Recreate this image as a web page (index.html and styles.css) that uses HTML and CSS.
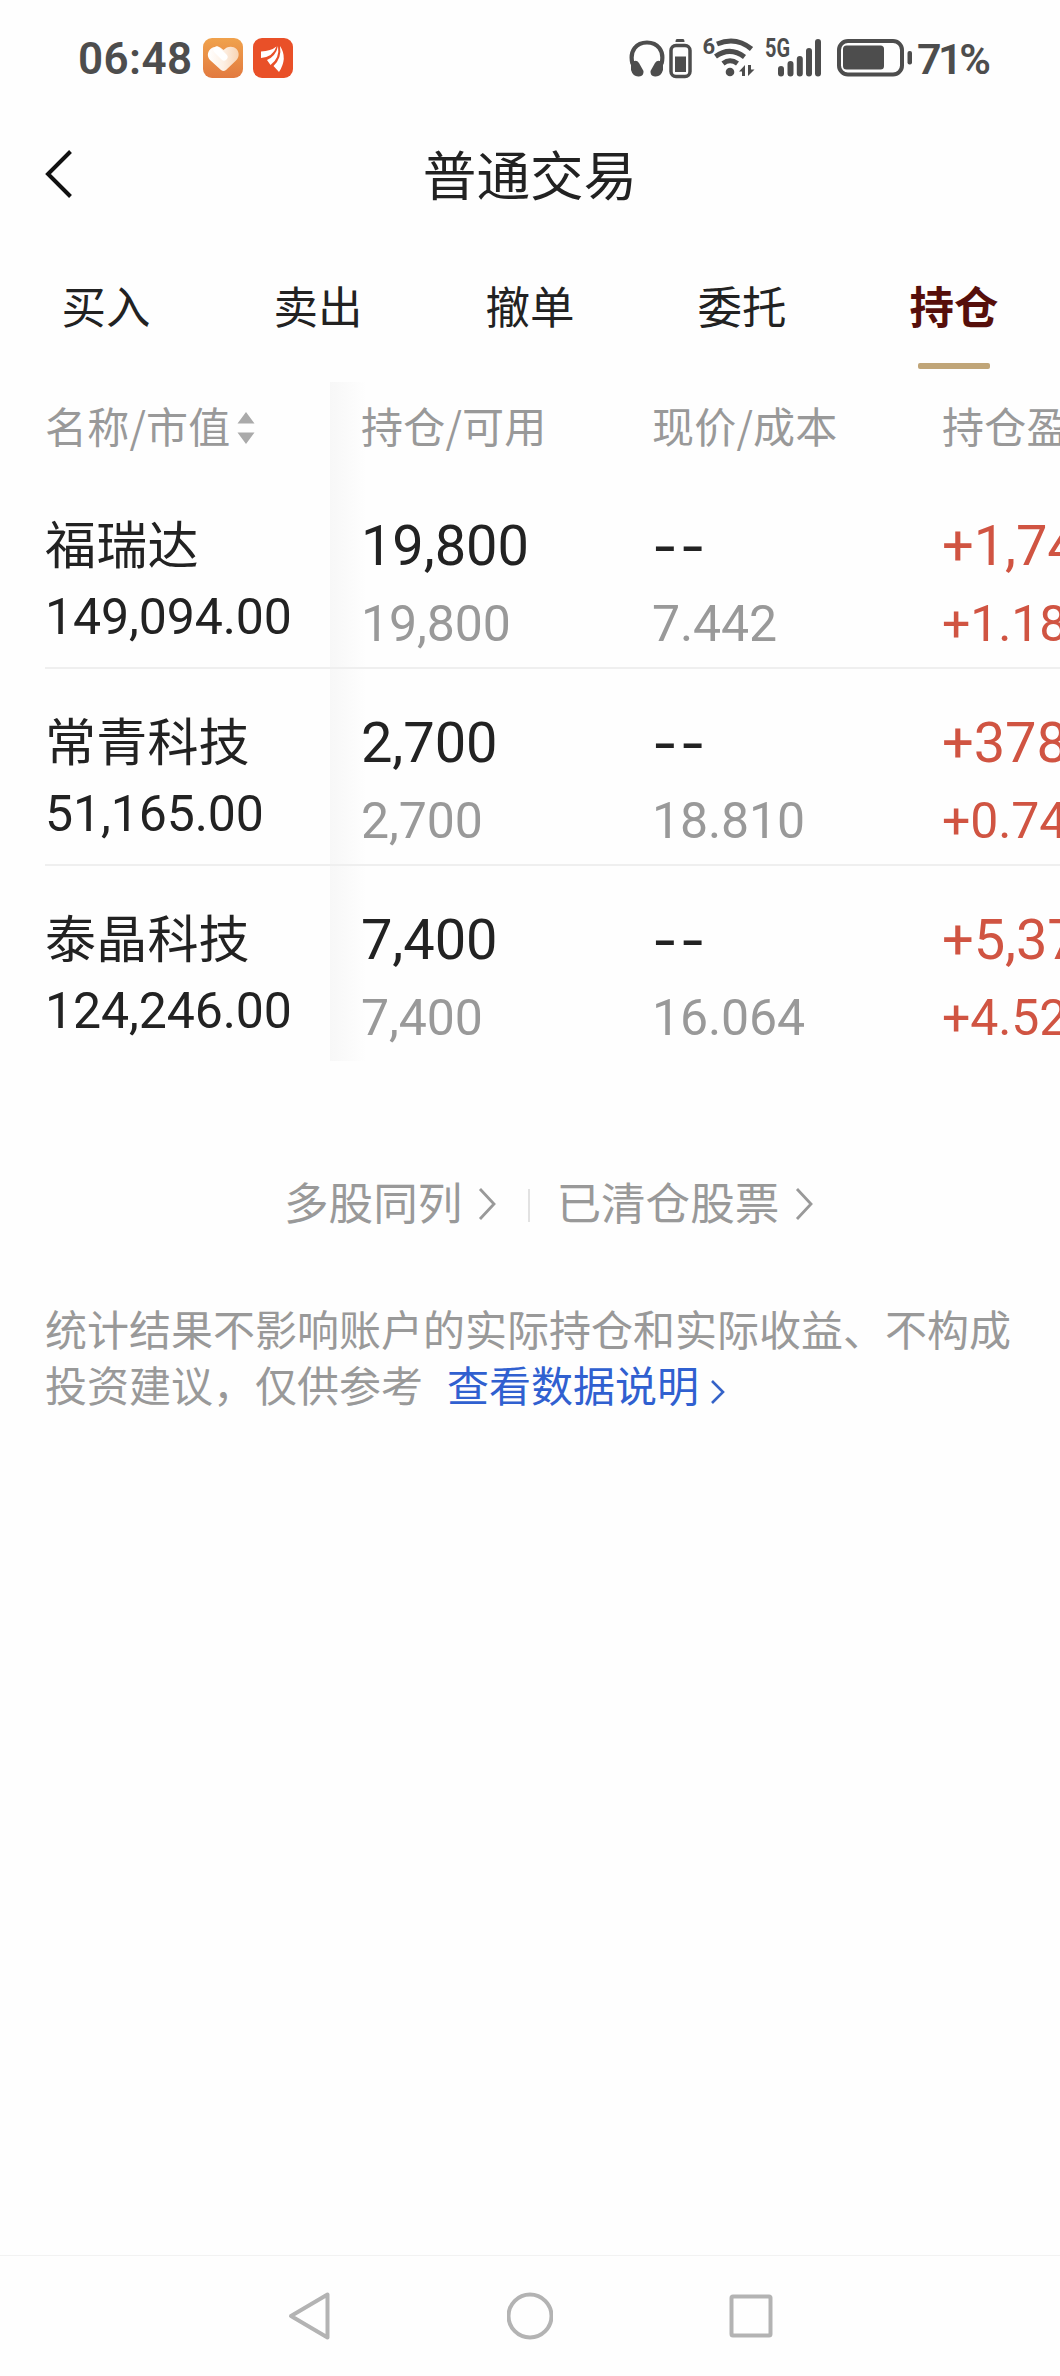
FILE: index.html
```html
<!DOCTYPE html>
<html lang="zh-CN">
<head>
<meta charset="utf-8">
<title>普通交易</title>
<link rel="stylesheet" href="styles.css">
</head>
<body>
<div class="screen">
  <header class="status">
    <div class="status-left">
      <span class="clock">06:48</span>
      <svg class="app" width="40" height="40" viewBox="0 0 40 40">
        <defs>
          <linearGradient id="orange" x1="0" y1="0" x2="0" y2="1"><stop offset="0" stop-color="#f0a24c"/><stop offset="1" stop-color="#e27a40"/></linearGradient>
          <linearGradient id="heart" x1="0" y1="0.3" x2="1" y2="0.3"><stop offset="0" stop-color="#fff"/><stop offset=".5" stop-color="#fdf0e4"/><stop offset="1" stop-color="#f8d4b4"/></linearGradient>
        </defs>
        <rect width="40" height="40" rx="9" fill="url(#orange)"/>
        <path d="M20.500 12C17 8 11.500 7.500 7.500 11C4 14.500 4 19 7.500 22.500L18 32Q20.500 34 23 32L33 22.500C36.500 19 36.500 14.500 33.500 11C30 7.500 24 8 20.500 12Z" fill="url(#heart)"/>
        <path d="M14 12L21 19" stroke="#fff" stroke-width="7" stroke-linecap="round"/>
      </svg>
      <svg class="app" width="40" height="40" viewBox="0 0 40 40">
        <rect width="40" height="40" rx="9" fill="#e95028"/>
        <path d="M23.500 8.500Q18 13 8 13.500V20Q20 19 23.500 8.500ZM25 8Q23 18 14 22L17.500 27Q27 20 25 8ZM27 8Q29 20 20.500 28L26 34Q35 20 27 8Z" fill="#fff"/>
      </svg>
    </div>
    <svg class="status-icons" width="284" height="46" viewBox="629 35 284 46" fill="none" stroke="#4d4d4d">
      <path d="M632.500 64C629 50 637 42.500 647 42.500S665 50 661.500 64" stroke-width="4.200"/>
      <path d="M631 63Q636 58.500 639 63L643.500 71Q644 76 639 76.500Q633 77 631 70ZM663 63Q658 58.500 655 63L650.500 71Q650 76 655 76.500Q661 77 663 70Z" fill="#4d4d4d" stroke="none"/>
      <rect x="671" y="45.500" width="19" height="31" rx="5" stroke-width="3.500"/>
      <path d="M675 56.500H686V72H675ZM677 39H683Q684.500 39 684.500 42H675.500Q675.500 39 677 39Z" fill="#4d4d4d" stroke="none"/>
      <path d="M717 44Q736 36 751.500 49M715.500 56.500Q730 46 744.500 57M723 63.500Q730 58 737.500 63.500" stroke-width="5"/>
      <circle cx="730" cy="72" r="4.300" fill="#4d4d4d" stroke="none"/>
      <path d="M739 71.500L745 65V76H742V71.500ZM754.500 69.500L748 76V65H751V69.500Z" fill="#4d4d4d" stroke="none"/>
      <path d="M781 69V73.500M790.500 64V73.500M799.800 59V73.500M809 51V73.500M818 42V73.500" stroke-width="6" stroke-linecap="round"/>
      <rect x="839" y="41" width="63" height="33.500" rx="9" stroke-width="4"/>
      <rect x="843" y="45.500" width="41" height="24" rx="3.500" fill="#4d4d4d" stroke="none"/>
      <rect x="907.500" y="51" width="4.500" height="13.500" rx="2" fill="#4d4d4d" stroke="none"/>
      <text x="702.500" y="53.500" class="wifi-gen">6</text>
      <text x="765" y="56.500" class="net-gen" textLength="25" lengthAdjust="spacingAndGlyphs">5G</text>
    </svg>
    <span class="percent">71%</span>
  </header>

  <div class="titlebar">
    <svg class="back" width="32" height="52" viewBox="0 0 32 52"><path d="M27.500 3.500L5 26L27.500 48.500" fill="none" stroke="#111" stroke-width="4"/></svg>
    <h1>普通交易</h1>
  </div>

  <nav class="tabs">
    <span class="tab">买入</span>
    <span class="tab">卖出</span>
    <span class="tab">撤单</span>
    <span class="tab">委托</span>
    <span class="tab active">持仓</span>
  </nav>

  <main class="holdings">
    <div class="row head">
      <div class="cell name">名称/市值<svg class="sort" width="18" height="34" viewBox="0 0 18 34"><path d="M0.500 12.500L9 1L17.500 12.500ZM0.500 21.500L9 33L17.500 21.500Z" fill="#aaa"/></svg></div>
      <div class="cell">持仓/可用</div>
      <div class="cell">现价/成本</div>
      <div class="cell">持仓盈</div>
    </div>
    <div class="row">
      <div class="cell name"><b>福瑞达</b><span>149,094.00</span></div>
      <div class="cell"><b>19,800</b><span>19,800</span></div>
      <div class="cell"><b class="none">--</b><span>7.442</span></div>
      <div class="cell gain"><b>+1,74</b><span>+1.18</span></div>
    </div>
    <div class="row">
      <div class="cell name"><b>常青科技</b><span>51,165.00</span></div>
      <div class="cell"><b>2,700</b><span>2,700</span></div>
      <div class="cell"><b class="none">--</b><span>18.810</span></div>
      <div class="cell gain"><b>+378</b><span>+0.74</span></div>
    </div>
    <div class="row">
      <div class="cell name"><b>泰晶科技</b><span>124,246.00</span></div>
      <div class="cell"><b>7,400</b><span>7,400</span></div>
      <div class="cell"><b class="none">--</b><span>16.064</span></div>
      <div class="cell gain"><b>+5,37</b><span>+4.52</span></div>
    </div>
  </main>

  <div class="links">
    <a>多股同列<svg width="19" height="34" viewBox="0 0 19 34"><path d="M2 2L16 17L2 32" fill="none" stroke="#999" stroke-width="2.800"/></svg></a>
    <i class="sep"></i>
    <a>已清仓股票<svg width="19" height="34" viewBox="0 0 19 34"><path d="M2 2L16 17L2 32" fill="none" stroke="#999" stroke-width="2.800"/></svg></a>
  </div>

  <p class="note">统计结果不影响账户的实际持仓和实际收益、不构成投资建议，仅供参考<a class="more">查看数据说明<svg width="16" height="26" viewBox="0 0 16 26"><path d="M2 2L13 13L2 24" fill="none" stroke="#3563c8" stroke-width="2.600"/></svg></a></p>

  <footer class="sysnav">
    <svg width="42" height="50" viewBox="0 0 42 50"><path d="M39.500 3.500V46.500L3 25Z"/></svg>
    <svg width="46" height="50" viewBox="0 0 46 50"><circle cx="23" cy="25" r="21.500"/></svg>
    <svg width="44" height="50" viewBox="0 0 44 50"><rect x="2.500" y="5.500" width="39" height="39" rx="1.500"/></svg>
  </footer>
</div>
</body>
</html>
```
FILE: styles.css
```css
* { box-sizing: border-box; }

body {
  margin: 0;
  background: #fefefe;
  color: #222;
  font-family: Roboto, "Noto Sans CJK SC", sans-serif;
}

.screen {
  display: flex;
  flex-direction: column;
  width: 1060px;
  height: 2376px;
  overflow: hidden;
}

.status {
  display: flex;
  justify-content: space-between;
  align-items: center;
  height: 116px;
  padding-left: 78px;
  color: #4d4d4d;
  font-size: 44px;
  font-weight: 600;
}

.status-left { display: flex; align-items: center; }
.clock { position: relative; top: 1px; width: 115px; letter-spacing: 0.4px; margin-right: 10px; }
.app { margin-right: 10px; }
.status-icons { margin-left: auto; }
.percent { position: relative; top: 1px; width: 147px; padding-left: 4px; font-size: 43px; letter-spacing: -3.5px; }
.wifi-gen, .net-gen { fill: #4d4d4d; stroke: none; font-weight: 700; }
.wifi-gen { font-size: 22px; }
.net-gen { font-size: 25px; }

.titlebar {
  display: grid;
  grid-template-columns: 120px 1fr 120px;
  align-items: center;
  height: 118px;
}

.back { margin: 0 0 2px 43px; }

.titlebar h1 {
  margin: 0;
  padding-top: 5px;
  text-align: center;
  font-size: 53.6px;
  font-weight: 400;
  line-height: 80px;
}

.tabs {
  display: grid;
  grid-template-columns: repeat(5, 1fr);
  height: 148px;
  padding-top: 43px;
}

.tab {
  display: flex;
  flex-direction: column;
  align-items: center;
  font-size: 44.5px;
  line-height: 64px;
}

.active { color: #560f0b; font-weight: 700; }

.active::after {
  content: "";
  width: 72px;
  height: 6px;
  margin-top: 22px;
  border-radius: 2px;
  background: #c0a578;
}

.holdings {
  width: 1060px;
  height: 679px;
  background: linear-gradient(90deg, #f7f7f7, #fefefe) 330px 0 / 36px 100% no-repeat;
}

.row {
  display: grid;
  grid-template-columns: 316px 291px 290px 118px;
  height: 197px;
  margin-left: 45px;
  padding-top: 32px;
  overflow: hidden;
  border-bottom: 2px solid #efefef;
}

.row:last-child { border-bottom: 0; }

.head {
  height: 90px;
  padding-top: 11px;
  border: 0;
  color: #999;
  font-family: "Noto Sans CJK SC", sans-serif;
  font-size: 42px;
  line-height: 64px;
  letter-spacing: 0.2px;
}

.cell { white-space: nowrap; }
.cell b, .cell span { display: block; }

.cell b {
  height: 84px;
  font-size: 56px;
  font-weight: 400;
  line-height: 84px;
  letter-spacing: -0.1px;
}

.cell span {
  height: 72px;
  color: #999;
  font-size: 50px;
  line-height: 72px;
  letter-spacing: -0.1px;
}

.name b { font-size: 51px; height: 77px; line-height: 85px; letter-spacing: 0.2px; }
.name span { color: #222; }
.cell .none { font-family: Inter, sans-serif; letter-spacing: 2px; }
.gain b, .gain span { color: #d05442; }
.sort { margin-left: 7px; vertical-align: -2px; }

.links {
  display: flex;
  align-items: center;
  margin: 112px 0 0 284px;
  color: #999;
  font-size: 44.6px;
  line-height: 64px;
}

.links a { display: flex; align-items: center; }
.links svg { margin: 0 0 3px 16px; }
.sep { width: 2px; height: 33px; margin: 0 26px 0 31px; background: #e2e2e2; }

.note {
  width: 970px;
  margin: 67px 0 0 45px;
  color: #999;
  font-size: 42px;
  line-height: 55.5px;
}

.more { margin-left: 24px; color: #3060d0; white-space: nowrap; }
.more svg { margin-left: 11px; vertical-align: -3px; }

.sysnav {
  display: flex;
  justify-content: space-between;
  align-items: center;
  height: 121px;
  margin-top: auto;
  padding: 0 287px 0 288px;
  border-top: 1px solid #f2f2f2;
}

.sysnav svg {
  fill: none;
  stroke: #b3b3b3;
  stroke-width: 4;
  stroke-linejoin: round;
}
```
